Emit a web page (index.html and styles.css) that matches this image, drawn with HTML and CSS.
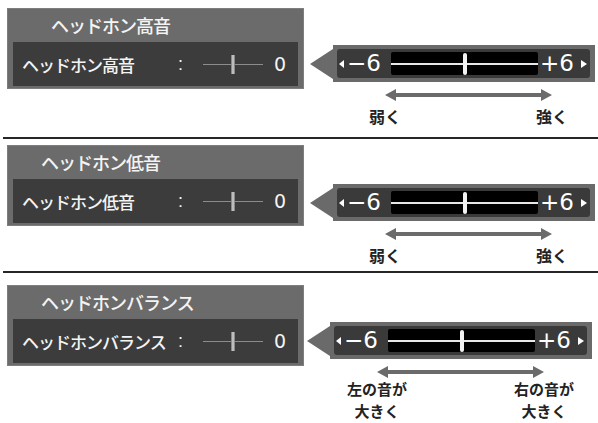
FILE: index.html
```html
<!DOCTYPE html>
<html lang="ja">
<head>
  <meta charset="UTF-8">
  <title>ヘッドホン設定</title>
  <link rel="stylesheet" href="styles.css">
</head>
<body>

  <!-- 高音 -->
  <div class="section s1">
    <div class="panel">
      <div class="panel-title wide">ヘッドホン高音</div>
      <div class="panel-row">
        <span class="row-label">ヘッドホン高音</span>
        <span class="colon">:</span>
        <span class="mini-slider"><span class="mini-knob"></span></span>
        <span class="row-value">0</span>
      </div>
    </div>
    <div class="side">
      <div class="scale">
        <span class="pointer"></span>
        <div class="scale-box">
          <div class="scale-inner">
            <span class="tri-left"></span>
            <span class="num">−6</span>
            <span class="track"><span class="knob"></span></span>
            <span class="num plus">+6</span>
            <span class="tri-right"></span>
          </div>
        </div>
      </div>
      <div class="range">
        <svg class="arrow" width="167" height="12" viewBox="0 0 167 12">
          <polygon points="0,6 11,0 11,4 156,4 156,0 167,6 156,12 156,8 11,8 11,12" fill="#6b6b6b"/>
        </svg>
        <div class="ends">
          <div class="end">弱く</div>
          <div class="end">強く</div>
        </div>
      </div>
    </div>
  </div>
  <div class="divider"></div>

  <!-- 低音 -->
  <div class="section s2">
    <div class="panel">
      <div class="panel-title">ヘッドホン低音</div>
      <div class="panel-row">
        <span class="row-label">ヘッドホン低音</span>
        <span class="colon">:</span>
        <span class="mini-slider"><span class="mini-knob"></span></span>
        <span class="row-value">0</span>
      </div>
    </div>
    <div class="side">
      <div class="scale">
        <span class="pointer"></span>
        <div class="scale-box">
          <div class="scale-inner">
            <span class="tri-left"></span>
            <span class="num">−6</span>
            <span class="track"><span class="knob"></span></span>
            <span class="num plus">+6</span>
            <span class="tri-right"></span>
          </div>
        </div>
      </div>
      <div class="range">
        <svg class="arrow" width="167" height="12" viewBox="0 0 167 12">
          <polygon points="0,6 11,0 11,4 156,4 156,0 167,6 156,12 156,8 11,8 11,12" fill="#6b6b6b"/>
        </svg>
        <div class="ends">
          <div class="end">弱く</div>
          <div class="end">強く</div>
        </div>
      </div>
    </div>
  </div>
  <div class="divider"></div>

  <!-- バランス -->
  <div class="section s3">
    <div class="panel">
      <div class="panel-title">ヘッドホンバランス</div>
      <div class="panel-row">
        <span class="row-label">ヘッドホンバランス</span>
        <span class="colon">:</span>
        <span class="mini-slider"><span class="mini-knob"></span></span>
        <span class="row-value">0</span>
      </div>
    </div>
    <div class="side">
      <div class="scale">
        <span class="pointer"></span>
        <div class="scale-box">
          <div class="scale-inner">
            <span class="tri-left"></span>
            <span class="num">−6</span>
            <span class="track"><span class="knob"></span></span>
            <span class="num plus">+6</span>
            <span class="tri-right"></span>
          </div>
        </div>
      </div>
      <div class="range">
        <svg class="arrow" width="167" height="12" viewBox="0 0 167 12">
          <polygon points="0,6 11,0 11,4 156,4 156,0 167,6 156,12 156,8 11,8 11,12" fill="#6b6b6b"/>
        </svg>
        <div class="ends">
          <div class="end">左の音が<br>大きく</div>
          <div class="end">右の音が<br>大きく</div>
        </div>
      </div>
    </div>
  </div>

</body>
</html>
```

FILE: styles.css
```css
body {
  margin: 0;
  background: #fff;
  font-family: "Noto Sans CJK JP", sans-serif;
  color: #222;
  width: 598px;
  height: 423px;
  overflow: hidden;
}

.section {
  display: flex;
  align-items: flex-start;
  box-sizing: border-box;
}

.s1 {
  height: 137px;
  padding-top: 8px;
}

.s2 {
  height: 132px;
  padding-top: 6px;
}

.s3 {
  height: 150px;
  padding-top: 12px;
}

.divider {
  height: 2px;
  margin-left: 3px;
  background: #262626;
}

/* left menu panel */
.panel {
  width: 297px;
  height: 81px;
  margin-left: 7px;
  box-sizing: border-box;
  background: #6b6b6b;
  border: 1px solid #7e7e7e;
  color: #f4f4f4;
}

.panel-title {
  height: 33px;
  line-height: 33px;
  font-size: 18px;
  font-weight: 500;
  letter-spacing: -1px;
  padding-left: 33px;
}

.panel-title.wide {
  padding-left: 43px;
}

.panel-row {
  display: flex;
  align-items: center;
  height: 44px;
  margin: 0 5px;
  padding: 0 12px 0 9px;
  background: #3c3c3c;
  font-size: 17px;
  font-weight: 500;
  letter-spacing: -1px;
}

.row-label {
  flex: 1;
}

.colon {
  font-family: "Liberation Sans", sans-serif;
  font-size: 18px;
  margin-right: 21px;
}

.mini-slider {
  display: flex;
  align-items: center;
  justify-content: center;
  width: 60px;
  height: 20px;
  background: linear-gradient(#8c8c8c, #8c8c8c) center / 100% 1px no-repeat;
}

.mini-knob {
  width: 4px;
  height: 19px;
  background: #bdbdbd;
  border-left: 1px solid #8a8a8a;
  border-right: 1px solid #8a8a8a;
  box-sizing: border-box;
}

.row-value {
  margin-left: 11px;
  font-family: "DejaVu Sans", sans-serif;
  font-size: 19px;
  letter-spacing: 0;
}

/* right scale */
.side {
  margin-left: 6px;
  padding-top: 37px;
}

.s2 .side {
  padding-top: 39px;
}

.s3 .side {
  margin-left: 3px;
}

.scale {
  display: flex;
  align-items: center;
}

.pointer {
  width: 0;
  height: 0;
  border-top: 15px solid transparent;
  border-bottom: 15px solid transparent;
  border-right: 23px solid #6a6a6a;
}

.scale-box {
  width: 262px;
  box-sizing: border-box;
  padding: 4px 5px 4px 4px;
  background: #6a6a6a;
}

.scale-inner {
  display: flex;
  align-items: center;
  height: 29px;
  padding: 0 3px 0 2px;
  background: #3a3a3a;
  border-radius: 3px;
  color: #fff;
}

.tri-left {
  width: 0;
  height: 0;
  border-top: 4px solid transparent;
  border-bottom: 4px solid transparent;
  border-right: 5px solid #fff;
  margin-right: 3px;
}

.tri-right {
  width: 0;
  height: 0;
  border-top: 4px solid transparent;
  border-bottom: 4px solid transparent;
  border-left: 6px solid #fff;
  margin-left: 7px;
}

.num {
  font-family: "DejaVu Sans", sans-serif;
  font-size: 23px;
  line-height: 29px;
  width: 34px;
}

.track {
  display: flex;
  align-items: center;
  justify-content: center;
  width: 147px;
  height: 23px;
  margin: 0 2px 0 10px;
  background: #000 linear-gradient(#e8e8e8, #e8e8e8) center / 100% 2px no-repeat;
  border-radius: 2px;
}

.knob {
  width: 4px;
  height: 22px;
  background: #f2f2f2;
  border-radius: 2px;
}

.range {
  width: 167px;
  margin-left: 75px;
}

.s3 .range {
  margin-left: 70px;
}

.arrow {
  display: block;
  margin-top: 7px;
}

.ends {
  display: flex;
  justify-content: space-between;
  margin-top: 4px;
}

.s3 .ends {
  margin-top: 0;
}

.end {
  width: 0;
  display: flex;
  justify-content: center;
  white-space: nowrap;
  text-align: center;
  font-size: 16px;
  font-weight: 700;
  line-height: 23px;
}

.s3 .end {
  font-size: 15px;
  line-height: 22px;
}
```
